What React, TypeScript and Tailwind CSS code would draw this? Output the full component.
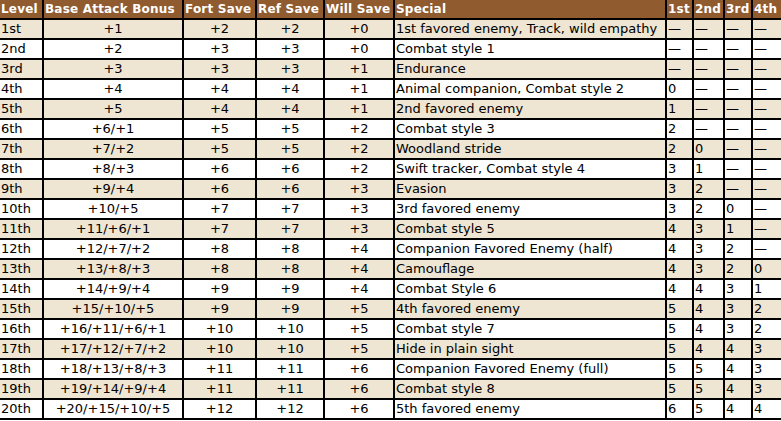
const HEADERS = ['Level', 'Base Attack Bonus', 'Fort Save', 'Ref Save', 'Will Save', 'Special', '1st', '2nd', '3rd', '4th'];

const ROWS: string[][] = [
  ['1st', '+1', '+2', '+2', '+0', '1st favored enemy, Track, wild empathy', '—', '—', '—', '—'],
  ['2nd', '+2', '+3', '+3', '+0', 'Combat style 1', '—', '—', '—', '—'],
  ['3rd', '+3', '+3', '+3', '+1', 'Endurance', '—', '—', '—', '—'],
  ['4th', '+4', '+4', '+4', '+1', 'Animal companion, Combat style 2', '0', '—', '—', '—'],
  ['5th', '+5', '+4', '+4', '+1', '2nd favored enemy', '1', '—', '—', '—'],
  ['6th', '+6/+1', '+5', '+5', '+2', 'Combat style 3', '2', '—', '—', '—'],
  ['7th', '+7/+2', '+5', '+5', '+2', 'Woodland stride', '2', '0', '—', '—'],
  ['8th', '+8/+3', '+6', '+6', '+2', 'Swift tracker, Combat style 4', '3', '1', '—', '—'],
  ['9th', '+9/+4', '+6', '+6', '+3', 'Evasion', '3', '2', '—', '—'],
  ['10th', '+10/+5', '+7', '+7', '+3', '3rd favored enemy', '3', '2', '0', '—'],
  ['11th', '+11/+6/+1', '+7', '+7', '+3', 'Combat style 5', '4', '3', '1', '—'],
  ['12th', '+12/+7/+2', '+8', '+8', '+4', 'Companion Favored Enemy (half)', '4', '3', '2', '—'],
  ['13th', '+13/+8/+3', '+8', '+8', '+4', 'Camouflage', '4', '3', '2', '0'],
  ['14th', '+14/+9/+4', '+9', '+9', '+4', 'Combat Style 6', '4', '4', '3', '1'],
  ['15th', '+15/+10/+5', '+9', '+9', '+5', '4th favored enemy', '5', '4', '3', '2'],
  ['16th', '+16/+11/+6/+1', '+10', '+10', '+5', 'Combat style 7', '5', '4', '3', '2'],
  ['17th', '+17/+12/+7/+2', '+10', '+10', '+5', 'Hide in plain sight', '5', '4', '4', '3'],
  ['18th', '+18/+13/+8/+3', '+11', '+11', '+6', 'Companion Favored Enemy (full)', '5', '5', '4', '3'],
  ['19th', '+19/+14/+9/+4', '+11', '+11', '+6', 'Combat style 8', '5', '5', '4', '3'],
  ['20th', '+20/+15/+10/+5', '+12', '+12', '+6', '5th favored enemy', '6', '5', '4', '4'],
];

// columns 1-4 are centred, the rest sit on the left
const centred = (i: number) => i >= 1 && i <= 4;

export default function App() {
  return (
    <div className="w-[781px] h-[421px] bg-white overflow-hidden" style={{ fontFamily: '"DejaVu Sans", Verdana, sans-serif' }}>
      <div className="grid grid-cols-[42px_138px_71px_66px_68px_270px_25px_29px_26px_28px] gap-[2px] bg-black pb-[2px]">
        {HEADERS.map(h => (
          <div key={h} className="h-[18px] bg-[#8f5b2f] text-white font-bold text-[12px] tracking-[0.2px] leading-[18px] pl-[1px] whitespace-nowrap overflow-hidden">
            {h}
          </div>
        ))}
        {ROWS.map((row, r) =>
          row.map((cell, i) => (
            <div
              key={`${r}-${i}`}
              className={`h-[18px] text-[13px] leading-[18px] text-black whitespace-nowrap overflow-hidden ${
                r % 2 === 0 ? 'bg-[#eee5d3]' : 'bg-white'
              } ${centred(i) ? 'text-center' : 'pl-[1px]'}`}
            >
              {cell}
            </div>
          ))
        )}
      </div>
    </div>
  );
}
